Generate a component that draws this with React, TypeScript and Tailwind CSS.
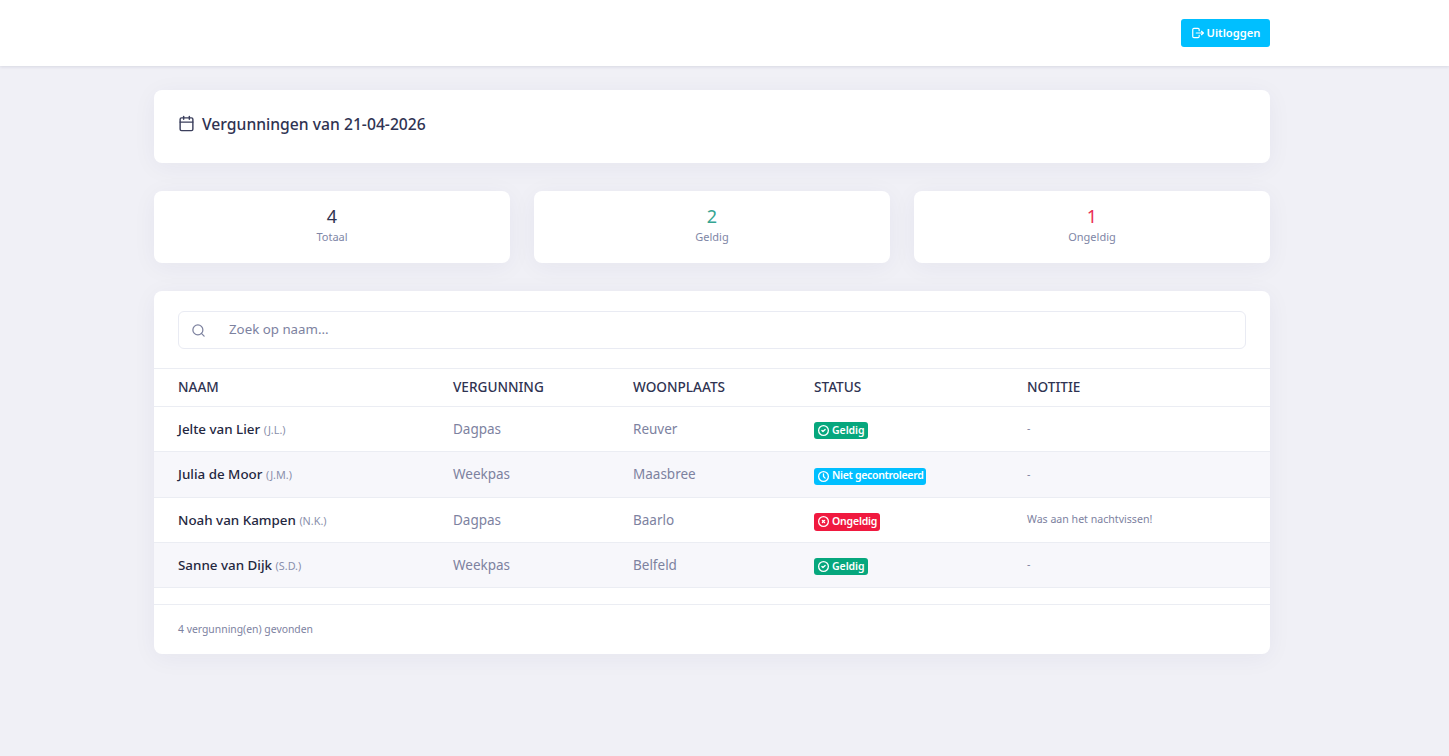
import { Calendar, Search } from 'lucide-react'
import { TbCircleCheck, TbCircleX, TbClock, TbLogout } from 'react-icons/tb'

type Status = 'geldig' | 'niet' | 'ongeldig'

type Permit = {
  name: string
  initials: string
  type: string
  city: string
  status: Status
  note: string
}

const permits: Permit[] = [
  { name: 'Jelte van Lier', initials: '(J.L.)', type: 'Dagpas', city: 'Reuver', status: 'geldig', note: '-' },
  { name: 'Julia de Moor', initials: '(J.M.)', type: 'Weekpas', city: 'Maasbree', status: 'niet', note: '-' },
  { name: 'Noah van Kampen', initials: '(N.K.)', type: 'Dagpas', city: 'Baarlo', status: 'ongeldig', note: 'Was aan het nachtvissen!' },
  { name: 'Sanne van Dijk', initials: '(S.D.)', type: 'Weekpas', city: 'Belfeld', status: 'geldig', note: '-' },
]

const rowHeights = ['h-[45px]', 'h-[46px]', 'h-[45px]', 'h-[45px]']

function StatusBadge({ status }: { status: Status }) {
  if (status === 'geldig') {
    return (
      <span className="inline-flex h-[17px] items-center gap-[2px] rounded-[3px] bg-[#06a77d] px-[3px] text-[10.5px] font-semibold tracking-[-0.05px] text-white">
        <TbCircleCheck size={13} strokeWidth={2.4} /> Geldig
      </span>
    )
  }
  if (status === 'niet') {
    return (
      <span className="inline-flex h-[17px] items-center gap-[2px] rounded-[3px] bg-[#00bfff] px-[3px] text-[10.5px] font-semibold tracking-[-0.3px] text-white">
        <TbClock size={13} strokeWidth={2.4} /> Niet gecontroleerd
      </span>
    )
  }
  return (
    <span className="inline-flex h-[18px] items-center gap-[2px] rounded-[3px] bg-[#f0193f] px-[3px] text-[10.5px] font-semibold tracking-[-0.2px] text-white">
      <TbCircleX size={13} strokeWidth={2.4} /> Ongeldig
    </span>
  )
}

function Stat({ value, label, color }: { value: string; label: string; color: string }) {
  return (
    <div className="flex h-[72px] flex-col items-center rounded-[8px] bg-white pt-[13px] shadow-[0_4px_24px_rgba(34,41,90,0.05)]">
      <div className={`text-[18px] leading-[24px] ${color}`}>{value}</div>
      <div className="mt-[1px] text-[11px] leading-[16px] text-[#8086a6]">{label}</div>
    </div>
  )
}

export default function App() {
  return (
    <div className="min-h-[756px] bg-[#f0f0f6] pr-[25px] font-['Noto_Sans','Open_Sans',sans-serif] text-[#2f3352]">
      <header className="-mr-[25px] h-[66px] bg-white pr-[25px] shadow-[0_1px_3px_rgba(34,41,90,0.12)]">
        <div className="mx-auto flex h-full w-[1116px] items-center justify-end">
          <button className="flex h-[28px] w-[89px] items-center justify-center gap-[2px] rounded-[3px] bg-[#00bfff] text-[11.2px] font-semibold text-white">
            <TbLogout size={14} /> Uitloggen
          </button>
        </div>
      </header>

      <main className="mx-auto w-[1116px] pt-[24px]">
        <div className="flex h-[73px] items-center gap-[7px] rounded-[8px] bg-white pb-[4px] pl-[24px] shadow-[0_4px_24px_rgba(34,41,90,0.05)]">
          <Calendar size={17} className="-mt-[2px] text-[#3b3f5c]" />
          <h1 className="text-[15.7px] font-medium text-[#2f3352]">Vergunningen van 21-04-2026</h1>
        </div>

        <div className="mt-[28px] grid grid-cols-3 gap-[24px]">
          <Stat value="4" label="Totaal" color="text-[#2f3352]" />
          <Stat value="2" label="Geldig" color="text-[#35a592]" />
          <Stat value="1" label="Ongeldig" color="text-[#ea2e55]" />
        </div>

        <div className="mt-[28px] rounded-[8px] bg-white shadow-[0_4px_24px_rgba(34,41,90,0.05)]">
          <div className="h-[77px] px-[24px] pt-[20px]">
            <div className="flex h-[38px] items-center rounded-[6px] border border-[#e9ebf3] pl-[12px]">
              <Search size={15} className="text-[#7d829f]" />
              <input
                placeholder="Zoek op naam..."
                className="ml-[23px] flex-1 bg-transparent text-[13.3px] outline-none placeholder:text-[#7d829f]"
              />
            </div>
          </div>

          <table className="w-full table-fixed border-collapse text-left">
            <colgroup>
              <col className="w-[275px]" />
              <col className="w-[180px]" />
              <col className="w-[181px]" />
              <col className="w-[213px]" />
              <col />
            </colgroup>
            <thead>
              <tr className="h-[38px] border-y border-[#ebedf3] text-[13.6px] text-[#2f3352]">
                <th className="pl-[24px] font-medium">NAAM</th>
                <th className="pl-[24px] font-medium">VERGUNNING</th>
                <th className="pl-[24px] font-medium">WOONPLAATS</th>
                <th className="pl-[24px] font-medium">STATUS</th>
                <th className="pl-[24px] font-medium">NOTITIE</th>
              </tr>
            </thead>
            <tbody>
              {permits.map((p, i) => (
                <tr
                  key={p.name}
                  className={`${rowHeights[i]} border-b border-[#ebedf3] ${i % 2 === 1 ? 'bg-[#f7f7fb]' : 'bg-white'}`}
                >
                  <td className="pl-[24px] text-[13.4px] font-medium text-[#25283f]">
                    {p.name} <span className="text-[10.8px] font-normal text-[#8a8fab]">{p.initials}</span>
                  </td>
                  <td className="pl-[24px] text-[13.5px] text-[#7d829f]">{p.type}</td>
                  <td className="pl-[24px] text-[13.5px] text-[#7d829f]">{p.city}</td>
                  <td className="pl-[24px] pt-[4px]">
                    <StatusBadge status={p.status} />
                  </td>
                  <td className="pl-[24px] text-[10.6px] text-[#7d829f]">{p.note}</td>
                </tr>
              ))}
            </tbody>
          </table>

          <div className="mt-[16px] flex h-[50px] items-center border-t border-[#ebedf3] px-[24px] text-[10.4px] text-[#7d829f]">
            4 vergunning(en) gevonden
          </div>
        </div>
      </main>
    </div>
  )
}
